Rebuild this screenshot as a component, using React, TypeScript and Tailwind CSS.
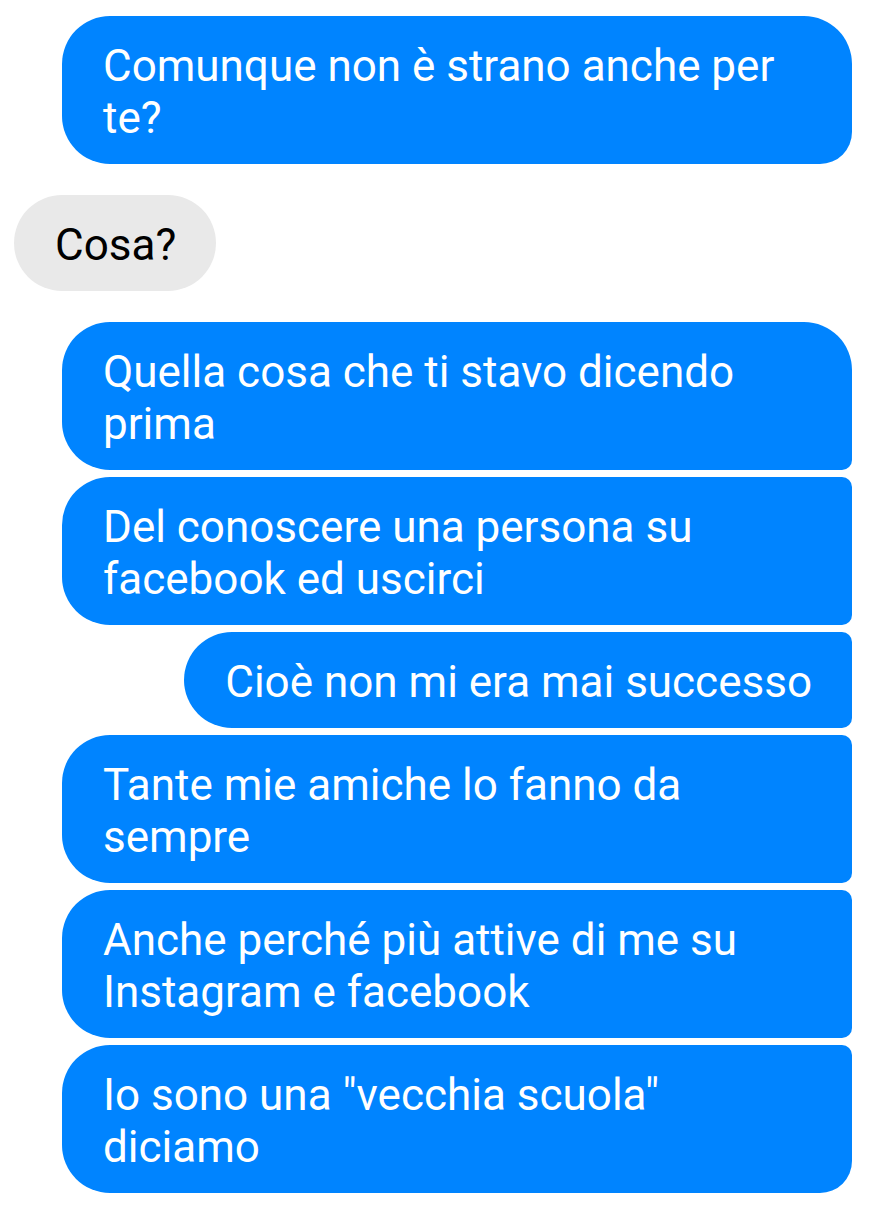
import React from 'react';

type Msg = {
  id: number;
  lines: string[];
  mine: boolean;
  corners: string;
};

const messages: Msg[] = [
  { id: 1, mine: true, lines: ['Comunque non è strano anche per', 'te?'], corners: 'rounded-[48px] rounded-br-[32px]' },
  { id: 2, mine: false, lines: ['Cosa?'], corners: 'rounded-[48px]' },
  { id: 3, mine: true, lines: ['Quella cosa che ti stavo dicendo', 'prima'], corners: 'rounded-[48px] rounded-br-[10px]' },
  { id: 4, mine: true, lines: ['Del conoscere una persona su', 'facebook ed uscirci'], corners: 'rounded-[48px] rounded-tr-[10px] rounded-br-[10px]' },
  { id: 5, mine: true, lines: ['Cioè non mi era mai successo'], corners: 'rounded-[48px] rounded-tr-[10px] rounded-br-[10px]' },
  { id: 6, mine: true, lines: ['Tante mie amiche lo fanno da', 'sempre'], corners: 'rounded-[48px] rounded-tr-[10px] rounded-br-[10px]' },
  { id: 7, mine: true, lines: ['Anche perché più attive di me su', 'Instagram e facebook'], corners: 'rounded-[48px] rounded-tr-[10px] rounded-br-[10px]' },
  { id: 8, mine: true, lines: ['Io sono una "vecchia scuola"', 'diciamo'], corners: 'rounded-[48px] rounded-tr-[10px] rounded-br-[32px]' },
];

const Bubble: React.FC<{ msg: Msg }> = ({ msg }) => {
  const multi = msg.lines.length > 1;
  return (
    <div
      className={`${msg.corners} ${msg.mine ? 'bg-[#0084ff] text-white' : 'bg-[#e9e9e9] text-black'} ${
        multi ? 'w-[790px]' : ''
      } pt-[24px] pb-[20px] pl-[41px] pr-[40px] text-[44px] leading-[52px] whitespace-nowrap`}
    >
      {msg.lines.map((l, i) => (
        <div key={i}>{l}</div>
      ))}
    </div>
  );
};

export default function App() {
  return (
    <div className="w-[875px] h-[1210px] bg-white font-['Roboto',sans-serif] pt-4 overflow-hidden">
      <div className="flex flex-col">
        {messages.map((m, i) => {
          const prev = messages[i - 1];
          const gap = !prev ? '' : prev.mine === m.mine ? 'mt-[7px]' : 'mt-[31px]';
          return (
            <div key={m.id} className={`flex ${m.mine ? 'justify-end pr-[23px]' : 'justify-start pl-[14px]'} ${gap}`}>
              <Bubble msg={m} />
            </div>
          );
        })}
      </div>
    </div>
  );
}
